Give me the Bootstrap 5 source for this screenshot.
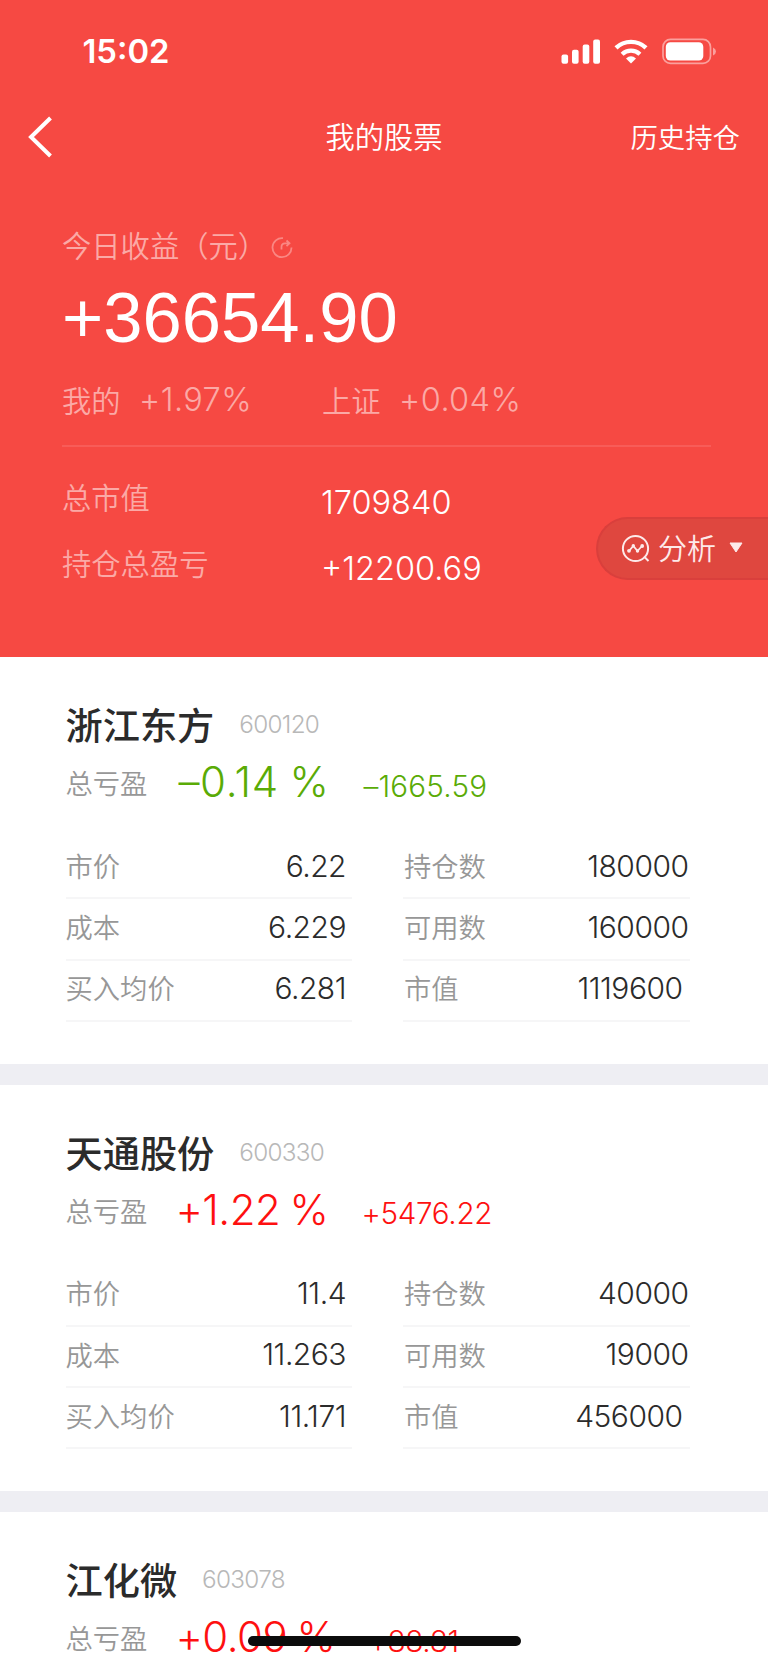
<!DOCTYPE html>
<html lang="zh-CN">
<head>
<meta charset="utf-8">
<meta name="viewport" content="width=device-width, initial-scale=1">
<title>我的股票</title>
<link href="https://cdn.jsdelivr.net/npm/bootstrap@5.3.0/dist/css/bootstrap.min.css" rel="stylesheet">
<style>
body{font-family:Inter,"Noto Sans CJK SC",sans-serif;background:#fff;color:#2b2b2b;height:1663px;overflow:hidden;line-height:1;font-weight:350}
.cn{font-family:"Noto Sans CJK SC",sans-serif;font-weight:350;white-space:nowrap;margin-bottom:3px}
.num{font-family:Inter,sans-serif;white-space:nowrap}
.hero{background:#f64943;color:#fff;height:657px}
.status{height:103px;padding:0 52px 0 82.5px}
.clock{font-size:32.8px;font-weight:600}
.topbar{height:68px;padding:0 28px}
.topbar>*{flex:1 1 0}
.title{font-size:29.3px;margin-bottom:2px}
.hist{font-size:27.4px;margin-bottom:1px}
.summary{padding:0 57px 0 62px}
.faded{color:#fba9a6}
.today{height:40px;margin-top:55px;font-size:29.3px}
.total{height:74px;margin-top:15px;font:400 70.6px/74px "Liberation Sans",sans-serif}
.rates{height:40px;margin-top:26px;font-size:29.3px}
.rates .num{font-size:32.5px;margin-left:18.5px;margin-bottom:1px;letter-spacing:.4px;font-weight:300}
.half{width:260px}
.rule{height:2px;background:#f85c58;margin-top:24px}
.sumrow{height:40px;font-size:29.3px}
.sumrow .cn{margin-bottom:4px}
.sumrow .num{font-size:32.5px;margin:8px 0 0 -1px}
.s1{margin-top:32px}
.s2{margin-top:26px}
.analyse{top:517px;width:172px;height:63px;border:2px solid #d93f3c;border-right:0;border-radius:32px 0 0 32px;background:#df473f;color:#fdeaea;font-size:29px;padding-left:23px}
.an{margin-left:7px}
.tri{margin-left:13px;margin-bottom:2px}
.stock{height:406.5px;padding:41px 78.5px 0 65.5px}
.stock-cut{height:151px;overflow:hidden}
.band{height:21px;background:#eeeef3}
.name{font-size:37.2px;font-weight:500;margin-bottom:0}
.head{height:54px}
.code{font-size:24.3px;color:#b8b8b8;margin:0 0 1px 25px;letter-spacing:-.7px;font-weight:300}
.pl{height:54px;margin-top:4px}
.lab{font-size:27.3px;color:#979797}
.pl .lab{margin-bottom:0}
.pct{font-size:42px;margin-left:31px;margin-right:34px;margin-bottom:2px;word-spacing:-2px}
.amt{font-size:29.6px;margin-top:7px}
.up{color:#fe1010}
.down{color:#5aab06}
.pct.down{letter-spacing:.7px}
.pct.up{letter-spacing:-.5px;margin-left:28px}
.amt.down{letter-spacing:.2px}
.amt.up{letter-spacing:-.3px;margin-left:-1px}
.grid{column-gap:51px;margin-top:28px}
.cell{height:61.25px;border-bottom:2px solid #f6f6f7;padding:0 6px 3px 0}
.cell.r{padding-right:1px;padding-left:1px}
.cell.last{padding-right:7px}
.cell .lab{margin-bottom:1px}
.cell .num{font-size:30px;letter-spacing:-.5px;margin-bottom:1px}
.home{left:248px;top:1636px;width:273px;height:10px;border-radius:5px;background:#0c0c0c}
</style>
</head>
<body class="position-relative">
<header class="hero position-relative">
  <div class="status d-flex justify-content-between align-items-center">
    <span class="num clock">15:02</span>
    <svg width="156" height="28" viewBox="560 37.500 156 28" fill="#fff">
      <rect x="561.5" y="54" width="6.6" height="9.2" rx="2"/><rect x="572" y="49.3" width="6.6" height="13.9" rx="2"/><rect x="582.7" y="44" width="6.6" height="19.2" rx="2"/><rect x="593.2" y="39" width="6.8" height="24.2" rx="2"/>
      <g transform="translate(631 63)"><path d="M0 0L-5-5Q0-9.500 5-5Z"/><path d="M-8.900-9.200A12.800 12.800 0 0 1 8.900-9.200" fill="none" stroke="#fff" stroke-width="4.200"/><path d="M-15-15.600A21.800 21.800 0 0 1 15-15.600" fill="none" stroke="#fff" stroke-width="4.400"/></g>
      <rect x="663" y="38.900" width="47.500" height="24" rx="7.500" fill="none" stroke="#fba09d" stroke-width="1.700"/><rect x="665.800" y="41.800" width="37.500" height="18.300" rx="4.500"/><path d="M713 47q3 1.500 3 4t-3 4z" fill="#fba09d"/>
    </svg>
  </div>
  <nav class="topbar d-flex align-items-center">
    <a href="#" aria-label="返回"><svg class="d-block" width="26" height="42" viewBox="0 0 26 42"><path d="M22.500 2L3 21L22.500 40" fill="none" stroke="#fff" stroke-width="4"/></svg></a>
    <span class="cn title text-center">我的股票</span>
    <span class="cn hist text-end">历史持仓</span>
  </nav>
  <div class="summary">
    <div class="today d-flex align-items-center faded">
      <span class="cn">今日收益（元）</span>
      <svg class="ms-1 mt-1" width="22" height="22" viewBox="0 0 22 22" fill="none" stroke="#fa8783" stroke-width="1.800"><path d="M12 1.200A9.500 9.500 0 1 0 20.500 10.500"/><path d="M10.500 12.500V10Q10.500 6.300 14 6.300H18M15.500 3.500L18.500 6.300L15.500 9.200"/></svg>
    </div>
    <div class="total">+36654.90</div>
    <div class="rates d-flex align-items-center faded">
      <div class="half d-flex align-items-center"><span class="cn">我的</span><span class="num">+1.97%</span></div>
      <div class="d-flex align-items-center"><span class="cn">上证</span><span class="num">+0.04%</span></div>
    </div>
    <div class="rule"></div>
    <div class="sumrow s1 d-flex align-items-center"><span class="cn half faded">总市值</span><span class="num">1709840</span></div>
    <div class="sumrow s2 d-flex align-items-center"><span class="cn half faded">持仓总盈亏</span><span class="num">+12200.69</span></div>
  </div>
  <div class="analyse position-absolute end-0 d-flex align-items-center">
    <svg width="30" height="30" viewBox="0 0 30 30" fill="none" stroke="#fdeaea" stroke-width="2"><circle cx="14.500" cy="14.500" r="12.600"/><path d="M23 22.500L27.500 27"/><path d="M8 17L12.300 12L16.500 17L21 12" stroke-width="1.800"/><g fill="#fdeaea" stroke="none"><circle cx="8" cy="16.800" r="1.900"/><circle cx="12.300" cy="11.800" r="1.700"/><circle cx="16.500" cy="17" r="1.700"/><circle cx="21.200" cy="12" r="1.900"/></g></svg>
    <span class="cn an">分析</span>
    <svg class="tri" width="14" height="11" viewBox="0 0 14 11"><path d="M1 1H13L7 10Z" fill="#fdeaea" stroke="#fdeaea" stroke-linejoin="round"/></svg>
  </div>
</header>
<main>
  <section class="stock">
    <div class="head d-flex align-items-center"><span class="cn name">浙江东方</span><span class="num code">600120</span></div>
    <div class="pl d-flex align-items-center"><span class="cn lab">总亏盈</span><span class="num pct down">–0.14 %</span><span class="num amt down">–1665.59</span></div>
    <div class="grid d-flex">
      <div class="flex-fill w-50">
        <div class="cell d-flex justify-content-between align-items-center"><span class="cn lab">市价</span><span class="num">6.22</span></div>
        <div class="cell d-flex justify-content-between align-items-center"><span class="cn lab">成本</span><span class="num">6.229</span></div>
        <div class="cell d-flex justify-content-between align-items-center"><span class="cn lab">买入均价</span><span class="num">6.281</span></div>
      </div>
      <div class="flex-fill w-50">
        <div class="cell r d-flex justify-content-between align-items-center"><span class="cn lab">持仓数</span><span class="num">180000</span></div>
        <div class="cell r d-flex justify-content-between align-items-center"><span class="cn lab">可用数</span><span class="num">160000</span></div>
        <div class="cell r last d-flex justify-content-between align-items-center"><span class="cn lab">市值</span><span class="num">1119600</span></div>
      </div>
    </div>
  </section>
  <div class="band"></div>
  <section class="stock">
    <div class="head d-flex align-items-center"><span class="cn name">天通股份</span><span class="num code">600330</span></div>
    <div class="pl d-flex align-items-center"><span class="cn lab">总亏盈</span><span class="num pct up">+1.22 %</span><span class="num amt up">+5476.22</span></div>
    <div class="grid d-flex">
      <div class="flex-fill w-50">
        <div class="cell d-flex justify-content-between align-items-center"><span class="cn lab">市价</span><span class="num">11.4</span></div>
        <div class="cell d-flex justify-content-between align-items-center"><span class="cn lab">成本</span><span class="num">11.263</span></div>
        <div class="cell d-flex justify-content-between align-items-center"><span class="cn lab">买入均价</span><span class="num">11.171</span></div>
      </div>
      <div class="flex-fill w-50">
        <div class="cell r d-flex justify-content-between align-items-center"><span class="cn lab">持仓数</span><span class="num">40000</span></div>
        <div class="cell r d-flex justify-content-between align-items-center"><span class="cn lab">可用数</span><span class="num">19000</span></div>
        <div class="cell r last d-flex justify-content-between align-items-center"><span class="cn lab">市值</span><span class="num">456000</span></div>
      </div>
    </div>
  </section>
  <div class="band"></div>
  <section class="stock stock-cut">
    <div class="head d-flex align-items-center"><span class="cn name">江化微</span><span class="num code">603078</span></div>
    <div class="pl d-flex align-items-center"><span class="cn lab">总亏盈</span><span class="num pct up">+0.09 %</span><span class="num amt up">+88.81</span></div>
  </section>
</main>
<div class="home position-absolute"></div>
<script src="https://cdn.jsdelivr.net/npm/bootstrap@5.3.0/dist/js/bootstrap.bundle.min.js"></script>
</body>
</html>
